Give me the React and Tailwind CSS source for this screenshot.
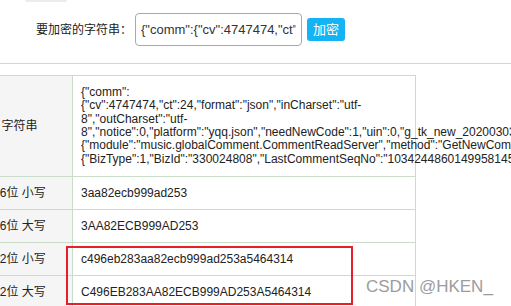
export default function App() {
  const font = "font-['Liberation_Sans','Noto_Sans_CJK_SC',sans-serif]";
  const rows = [
    ["16位 小写", "3aa82ecb999ad253"],
    ["16位 大写", "3AA82ECB999AD253"],
    ["32位 小写", "c496eb283aa82ecb999ad253a5464314"],
    ["32位 大写", "C496EB283AA82ECB999AD253A5464314"],
  ];
  const lines = [
    '{"comm":',
    '{"cv":4747474,"ct":24,"format":"json","inCharset":"utf-',
    '8","outCharset":"utf-',
    '8","notice":0,"platform":"yqq.json","needNewCode":1,"uin":0,"g_tk_new_20200303":5381,"g_tk":5381},"req_0":',
    '{"module":"music.globalComment.CommentReadServer","method":"GetNewCommentList","param":',
    '{"BizType":1,"BizId":"330024808","LastCommentSeqNo":"10342448601499581450","PageSize":25,"PageNum":0}}}',
  ];
  return (
    <div className={`relative w-[511px] h-[306px] overflow-hidden bg-white ${font}`}>
      <div className="ml-[25px] w-[42px] h-[2px] rounded-b-md bg-[#ececec]" />
      <div className="flex items-center mt-[11px] h-[33px]">
        <span className="ml-[36px] w-[99px] shrink-0 text-[12px] text-[#222] whitespace-nowrap">要加密的字符串：</span>
        <input
          readOnly
          value={'{"comm":{"cv":4747474,"ct":24,"format":"json","inCharset":"utf-8"}}'}
          className={`w-[167px] h-[33px] shrink-0 border border-[#a9a9a9] rounded-[4px] px-[5px] text-[13px] text-[#333] outline-none ${font}`}
        />
        <button className="ml-[5px] w-[38px] h-[23px] shrink-0 bg-[#13b3f4] rounded-[3px] text-white text-[13px] leading-none">
          加密
        </button>
      </div>
      <div className="mt-[17px] h-px bg-[#d5d5d5]" />
      <div className="mt-[11px] -ml-[34px] w-[450px] border border-[#c9dbc9] text-[12px] text-[#222]">
        <div className="flex border-b border-[#c9dbc9]">
          <div className="w-[106px] shrink-0 bg-[#f5f5f5] border-r border-[#c9dbc9] flex items-center justify-center">
            字符串
          </div>
          <div className="flex-1 min-w-0 pl-[8px] py-[10px] leading-[13.33px]">
            {lines.map((l, i) => (
              <div key={i} className="whitespace-nowrap">{l}</div>
            ))}
          </div>
        </div>
        {rows.map(([k, v], i) => (
          <div key={i} className="flex h-[33px] border-b border-[#c9dbc9]">
            <div className="w-[106px] shrink-0 bg-[#f5f5f5] border-r border-[#c9dbc9] flex items-center justify-center whitespace-nowrap">
              {k}
            </div>
            <div className="flex-1 pl-[8px] flex items-center">{v}</div>
          </div>
        ))}
      </div>
      <div className="absolute left-[66px] top-[246px] w-[287px] h-[59px] border-2 border-[#e5202a]" />
      <div className="absolute left-[366px] top-[278px] text-[17px] leading-[17px] text-[#9c9c9c] whitespace-nowrap">
        CSDN @HKEN_
      </div>
    </div>
  );
}
